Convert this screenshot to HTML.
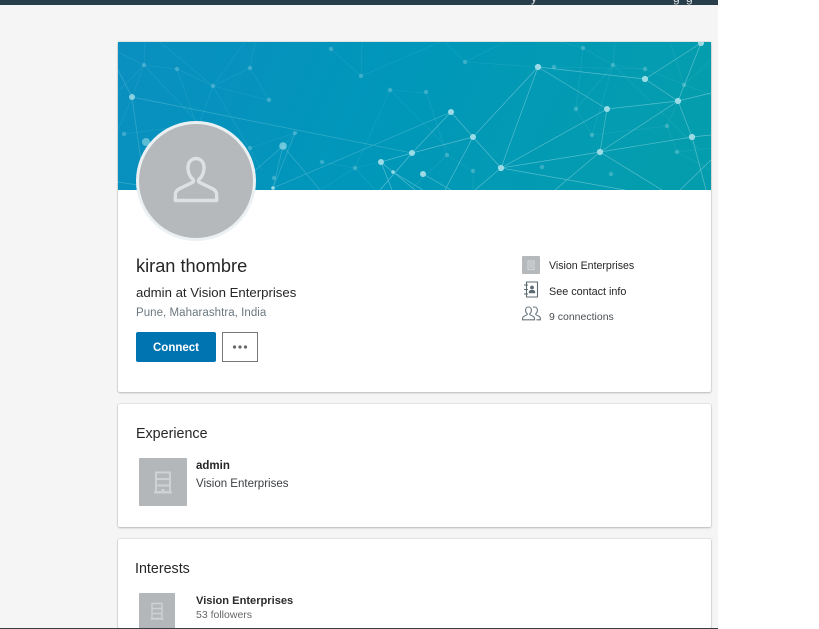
<!DOCTYPE html>
<html>
<head>
<meta charset="utf-8">
<style>
html,body{margin:0;padding:0;background:#fff;width:819px;height:629px;overflow:hidden}
body{position:relative;font-family:"Liberation Sans",sans-serif;color:#1f1f1f}
.abs{position:absolute;white-space:nowrap}
#bg{position:absolute;left:0;top:0;width:718px;height:629px;background:#f5f5f5}
#bar{position:absolute;left:0;top:0;width:718px;height:5px;background:#283e4a;overflow:hidden}
#bot{position:absolute;left:0;top:628px;width:718px;height:1px;background:#3a3f45}
.card{position:absolute;left:118px;width:593px;background:#fff;border-radius:2px;box-shadow:0 0 0 1px rgba(0,0,0,.06),0 1px 2px 0 rgba(0,0,0,.2);overflow:hidden}
</style>
</head>
<body>
<div id="bg"></div>
<div id="bar">
<span class="abs" style="left:531px;top:-9px;font-size:12px;color:#dfe3e6">y</span>
<span class="abs" style="left:673px;top:-9px;font-size:12px;color:#dfe3e6">g</span>
<span class="abs" style="left:686px;top:-9px;font-size:12px;color:#dfe3e6">g</span>
</div>

<div class="card" style="top:42px;height:350px"></div>
<div class="card" style="top:404px;height:123px"></div>
<div class="card" style="top:539px;height:89px"></div>

<svg class="abs" style="left:118px;top:42px" width="593" height="148" viewBox="118 42 593 148">
<defs>
<linearGradient id="g" x1="0" y1="0" x2="1" y2="0.12">
<stop offset="0" stop-color="#0a8fc0"/><stop offset=".5" stop-color="#0097ba"/><stop offset="1" stop-color="#049dae"/>
</linearGradient>
</defs>
<rect x="118" y="42" width="593" height="148" fill="url(#g)"/>
<g stroke="#8fd3e2" stroke-width=".6" fill="none" opacity=".16">
<path d="M118 92L144 65L177 69L213 86L250 68L269 100L213 86L177 69L200 135M144 65L132 97L118 130M144 65L200 125M118 52L144 65L145 42M160 42L213 86L245 42M250 68L255 42M213 86L195 135M213 86L262 170"/>
<path d="M124 134L170 128M283 146L295 133L250 148M322 162L355 168L381 162M355 168L320 190M355 168L375 190M331 49L361 76L440 42M361 76L362 42M390 90L426 93M390 90L355 168M390 90L450 150M426 92L447 155M465 62L445 42M465 62L505 42M465 62L538 67"/>
<path d="M583 48L613 65L645 69L554 67M583 48L576 109L592 135L613 65L576 109M613 65L700 150M645 69L711 95M684 85L711 60M592 135L667 126L677 152L711 148M677 152L711 170M667 126L678 101M447 155L473 171L473 190M447 155L410 190M583 48L560 42M613 65L615 42M684 85L670 42"/>
</g>
<g stroke="#a5e0ea" stroke-width=".7" fill="none" opacity=".3">
<path d="M132 97L412 153M132 97L145 190M118 70L132 97M283 146L273 188L295 133M283 146L320 190M283 146L250 175M118 182L170 190M273 188L451 112"/>
</g>
<g stroke="#a5e0ea" stroke-width=".7" fill="none" opacity=".5">
<path d="M381 162L412 153L451 112M381 162L393 172L423 190M381 162L392 190M412 153L380 190M393 172L415 190M423 174L451 190"/>
<path d="M412 153L473 137M473 137L501 168L475 190M473 137L445 190M451 112L473 137M473 137L538 67M501 168L538 67M501 168L607 109M501 168L600 152M501 168L625 190M538 67L607 109M538 67L645 79L701 43L678 101L645 79M607 109L678 101L711 93M607 109L600 152M600 152L678 101M600 152L692 137L711 135M600 152L555 190M600 152L662 190M678 101L692 137L706 190M711 160L680 190"/>
</g>
<g fill="#a5dde8" opacity=".33">
<circle cx="144" cy="65" r="2.2"/><circle cx="177" cy="69" r="2.2"/><circle cx="213" cy="86" r="2.2"/><circle cx="250" cy="68" r="2.2"/><circle cx="269" cy="100" r="2.2"/><circle cx="124" cy="134" r="2.2"/><circle cx="295" cy="133" r="2.2"/><circle cx="250" cy="148" r="2.2"/><circle cx="274" cy="178" r="2.2"/><circle cx="322" cy="162" r="2.2"/><circle cx="355" cy="168" r="2.2"/><circle cx="331" cy="49" r="2.2"/><circle cx="361" cy="76" r="2.2"/><circle cx="390" cy="90" r="2.2"/><circle cx="426" cy="92" r="2.2"/><circle cx="465" cy="62" r="2.2"/><circle cx="554" cy="67" r="2.2"/><circle cx="583" cy="48" r="2.2"/><circle cx="613" cy="65" r="2.2"/><circle cx="645" cy="69" r="2.2"/><circle cx="684" cy="85" r="2.2"/><circle cx="576" cy="109" r="2.2"/><circle cx="667" cy="126" r="2.2"/><circle cx="592" cy="135" r="2.2"/><circle cx="677" cy="152" r="2.2"/><circle cx="542" cy="167" r="2.2"/><circle cx="611" cy="174" r="2.2"/><circle cx="473" cy="171" r="2.2"/><circle cx="447" cy="155" r="2.2"/>
</g>
<g fill="#9adbe6">
<circle cx="146" cy="142" r="4" opacity=".6"/><circle cx="283" cy="146" r="3.8" opacity=".7"/><circle cx="132" cy="97" r="3" opacity=".85"/><circle cx="273" cy="188" r="1.8"/><circle cx="381" cy="162" r="3"/><circle cx="393" cy="172" r="1.8"/><circle cx="412" cy="153" r="3"/><circle cx="423" cy="174" r="3"/><circle cx="451" cy="112" r="3"/><circle cx="473" cy="137" r="3"/><circle cx="501" cy="168" r="3.1"/><circle cx="538" cy="67" r="3.1"/><circle cx="607" cy="109" r="3"/><circle cx="600" cy="152" r="3.1"/><circle cx="645" cy="79" r="3.1"/><circle cx="678" cy="101" r="3.1"/><circle cx="692" cy="137" r="3.1"/><circle cx="701" cy="43" r="3.1"/>
</g>
</svg>

<!-- avatar -->
<svg class="abs" style="left:133px;top:118px" width="126" height="126" viewBox="133 118 126 126">
<circle cx="196" cy="181" r="60" fill="#ebf0f3"/>
<circle cx="196" cy="181" r="57" fill="#b6b9bc"/>
<path d="M196 158.500c-4.800 0-8 4-8 9.200 0 4.800 1.900 8.800 4.800 11.500 1 1.100.9 2.600-.5 3.300l-13 6.300c-3 1.500-4 3.700-4 6.200v5.500h41.400v-5.500c0-2.500-1-4.700-4-6.200l-13-6.300c-1.400-.7-1.500-2.200-.5-3.300 2.900-2.700 4.800-6.700 4.800-11.500 0-5.200-3.200-9.200-8-9.200z" fill="none" stroke="#dfe0e1" stroke-width="3.400" stroke-linejoin="round"/>
</svg>

<div class="abs" style="left:136px;top:255px;font-size:18.200px;line-height:22px;color:#262626">kiran thombre</div>
<div class="abs" style="left:136px;top:284px;font-size:13.200px;line-height:18px;color:#262626">admin at Vision Enterprises</div>
<div class="abs" style="left:136px;top:305px;font-size:11.500px;line-height:16px;color:#6b7880;letter-spacing:.05px">Pune, Maharashtra, India</div>

<div class="abs" style="left:136px;top:332px;width:80px;height:30px;background:#0073b1;border-radius:2px;color:#fff;font-size:11.500px;font-weight:bold;line-height:32px;text-align:center">Connect</div>
<div class="abs" style="left:222px;top:332px;width:34px;height:28px;border:1px solid #777;background:#fff"></div>
<svg class="abs" style="left:222px;top:332px" width="36" height="30"><g fill="#666"><circle cx="12.500" cy="15" r="1.600"/><circle cx="18" cy="15" r="1.600"/><circle cx="23.500" cy="15" r="1.600"/></g></svg>

<!-- right column -->
<svg class="abs" style="left:522px;top:256px" width="18" height="18"><rect width="18" height="18" rx="1" fill="#b6b9bc"/><path d="M6 5h6v8.500H6zM7.300 7h3.400M7.300 9h3.400M7.300 11h3.400" fill="none" stroke="#d5d6d8" stroke-width="1"/></svg>
<div class="abs" style="left:549px;top:258px;font-size:10.600px;line-height:16px;color:#262626">Vision Enterprises</div>

<svg class="abs" style="left:523px;top:281px" width="16" height="17"><path d="M3.500 1h11v15h-11zM1 4h4M1 8.500h4M1 13h4" fill="none" stroke="#5c6a72" stroke-width="1.100"/><circle cx="9" cy="6.500" r="1.900" fill="#5c6a72"/><path d="M5.800 12.200v-1.200c0-1.500 1.500-2.100 3.200-2.100s3.200.6 3.200 2.100v1.200z" fill="#5c6a72"/></svg>
<div class="abs" style="left:549px;top:284px;font-size:10.800px;line-height:16px;color:#262626">See contact info</div>

<svg class="abs" style="left:522px;top:306px" width="19" height="15"><path d="M6.500 1C4.700 1 3.600 2.400 3.600 4.200c0 1.500.6 2.600 1.500 3.400.4.400.3.900-.1 1.100L2 10.300c-1 .5-1.500 1.300-1.500 2.500v1h12v-1c0-1.200-.5-2-1.500-2.500L8 8.700c-.4-.2-.5-.7-.1-1.100.9-.8 1.500-1.900 1.500-3.400C9.400 2.400 8.300 1 6.500 1zM11 1.300c.5-.2 1-.3 1.500-.3 1.800 0 2.900 1.400 2.900 3.200 0 1.500-.6 2.600-1.500 3.400-.4.400-.3.900.1 1.100l2.900 1.600c1 .5 1.500 1.300 1.500 2.500v1h-4" fill="none" stroke="#6a767d" stroke-width="1.100"/></svg>
<div class="abs" style="left:549px;top:309px;font-size:10.500px;line-height:16px;color:#4a4f53">9 connections</div>

<!-- experience -->
<div class="abs" style="left:136px;top:425px;font-size:14.300px;line-height:18px;color:#262626">Experience</div>
<svg class="abs" style="left:139px;top:458px" width="48" height="48"><rect width="48" height="48" rx="1" fill="#b4b7ba"/><path d="M17 14.500h14v19.500H17zM17 21h14M17 27.500h14M15 34.500h18" fill="none" stroke="#cfd1d3" stroke-width="2"/><rect x="22.500" y="31" width="3" height="3" fill="#cfd1d3"/></svg>
<div class="abs" style="left:196px;top:458px;font-size:11.500px;font-weight:bold;line-height:16px;color:#262626">admin</div>
<div class="abs" style="left:196px;top:476px;font-size:11.500px;line-height:16px;color:#3a3f42">Vision Enterprises</div>

<!-- interests -->
<div class="abs" style="left:135px;top:560px;font-size:14.300px;line-height:18px;color:#262626">Interests</div>
<svg class="abs" style="left:139px;top:593px" width="36" height="35"><rect width="36" height="36" rx="1" fill="#b4b7ba"/><path d="M13 10.500h10v15H13zM13 15.500h10M13 20.500h10M11.500 26h13" fill="none" stroke="#cfd1d3" stroke-width="1.400"/></svg>
<div class="abs" style="left:196px;top:593px;font-size:11.100px;font-weight:bold;line-height:16px;color:#2b2b2b">Vision Enterprises</div>
<div class="abs" style="left:196px;top:608px;font-size:10.500px;line-height:14px;color:#666">53 followers</div>

<div id="bot"></div>
</body>
</html>
